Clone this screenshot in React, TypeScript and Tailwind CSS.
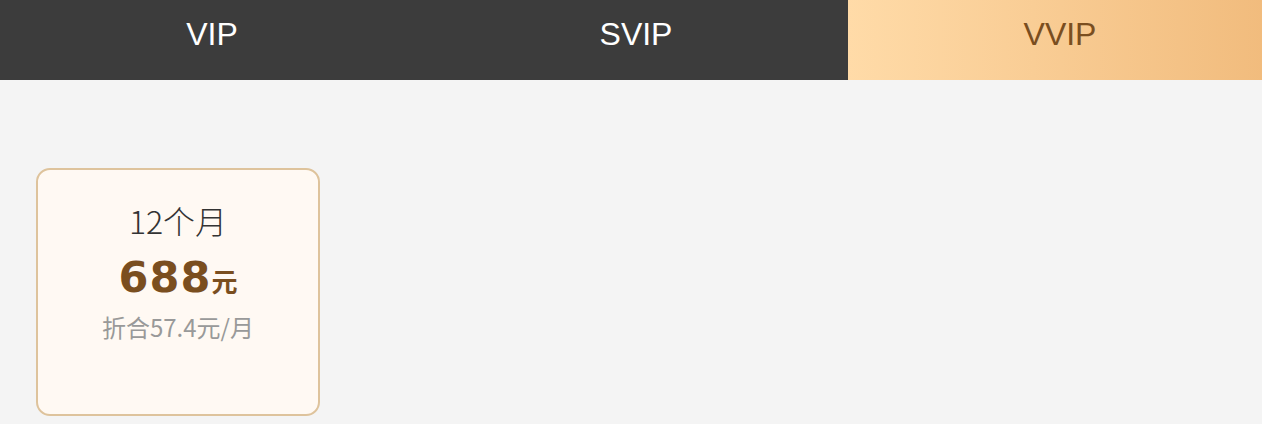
import { useState } from 'react';

const tabs = ['VIP', 'SVIP', 'VVIP'];

export default function App() {
  const [active, setActive] = useState(2);

  return (
    <div className="min-h-screen w-full overflow-hidden bg-[#f4f4f4]" style={{ fontFamily: '"Noto Sans CJK SC", sans-serif' }}>
      <div className="flex h-20 w-[1272px] bg-[#3c3c3c]">
        {tabs.map((t, i) => (
          <button
            key={t}
            onClick={() => setActive(i)}
            className={
              i === active
                ? 'flex w-[424px] shrink-0 items-center justify-center bg-gradient-to-r from-[#ffdba8] to-[#f1bb7c] pb-3 text-[32px] text-[#7a4e1f]'
                : 'flex w-[424px] shrink-0 items-center justify-center pb-3 text-[32px] text-white'
            }
            style={{ fontFamily: '"Liberation Sans", Arial, sans-serif' }}
          >
            {t}
          </button>
        ))}
      </div>

      <div className="px-[36px] pt-[88px]">
        <div className="flex h-[248px] w-[284px] flex-col items-center rounded-[14px] border-2 border-[#dec39c] bg-[#fff9f3] pt-[30px]">
          <div className="text-[32px] font-light leading-[40px] text-[#333]">12个月</div>
          <div className="mt-[11px] flex items-baseline text-[#7a4e1f]">
            <span className="font-['DejaVu_Sans',sans-serif] text-[43px] font-bold leading-[52px] tracking-[1px]">688</span>
            <span className="text-[26px] font-bold">元</span>
          </div>
          <div className="mt-[9px] text-[24px] leading-[30px] text-[#999]">折合57.4元/月</div>
        </div>
      </div>
    </div>
  );
}
